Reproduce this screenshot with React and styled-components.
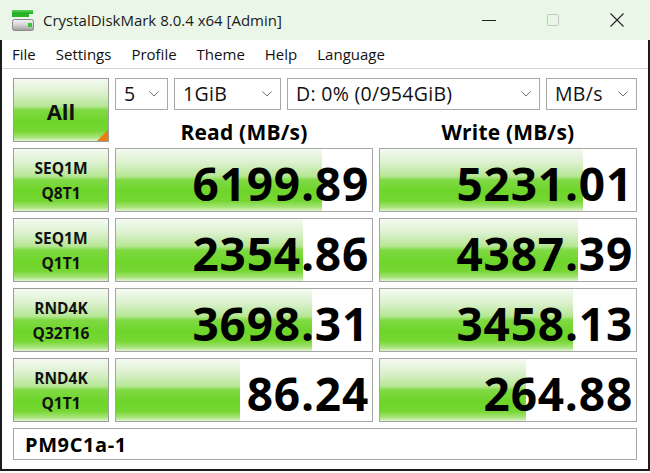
import React from "react";
import styled, { createGlobalStyle } from "styled-components";

const GlobalStyle = createGlobalStyle`
  html, body { margin: 0; padding: 0; background: #ffffff; overflow: hidden; }
  * { box-sizing: border-box; }
`;

const FONT = `"Open Sans", "Noto Sans", sans-serif`;

const GREEN = `linear-gradient(to bottom, #f4faf1 0%, #dcf1cf 22%, #b6e694 44%, #80d944 50%, #6ed52a 68%, #76d733 84%, #a6e478 94%, #e0f5d0 100%)`;

const Window = styled.div`
  width: 650px;
  height: 473px;
  display: flex;
  flex-direction: column;
  font-family: ${FONT};
  color: #000;
  background: #fff;
`;

const TitleBar = styled.div`
  height: 40px;
  flex: none;
  display: flex;
  align-items: center;
  background: #eaf7e8;
  padding-left: 12px;
`;

const TitleText = styled.div`
  margin-left: 9px;
  font-size: 15px;
  color: #1a1a1a;
  flex: 1;
  margin-top: -1px;
`;

const Controls = styled.div`
  display: flex;
  align-items: center;
  height: 100%;
  padding-right: 1px;
`;

const CtrlBtn = styled.div`
  width: 64px;
  height: 100%;
  display: flex;
  align-items: center;
  justify-content: center;
`;

const Frame = styled.div`
  height: 431px;
  flex: none;
  border: 2px solid #1c1c1c;
  border-top: none;
  display: flex;
  flex-direction: column;
`;

const MenuBar = styled.div`
  height: 29px;
  flex: none;
  display: flex;
  align-items: center;
  border-bottom: 1px solid #d4d4d4;
`;

const MenuItem = styled.div`
  font-size: 15px;
  padding: 0 10px;
  margin-top: -1px;
  color: #111;
`;

const Content = styled.div`
  padding: 9px 11px 0 11px;
  display: grid;
  grid-template-columns: 96px 258px 258px;
  grid-template-rows: 64px 64px 64px 64px 64px 32px;
  column-gap: 6px;
  row-gap: 6px;
`;

const GreenButton = styled.div`
  position: relative;
  border: 1px solid #9c9c9c;
  background: ${GREEN};
  display: flex;
  flex-direction: column;
  align-items: center;
  justify-content: center;
  font-weight: 700;
  font-size: ${(p) => p.$size || 15.5}px;
  line-height: ${(p) => p.$lh || 25}px;
  padding-top: ${(p) => p.$pt || 1}px;
  color: #111;
`;

const Corner = styled.div`
  position: absolute;
  right: 0;
  bottom: 0;
  width: 0;
  height: 0;
  border-left: 11px solid transparent;
  border-bottom: 11px solid #f07b10;
`;

const TopRight = styled.div`
  grid-column: 2 / span 2;
  display: grid;
  grid-template-rows: 32px 32px;
`;

const SelectRow = styled.div`
  display: flex;
  gap: 6px;
`;

const Select = styled.div`
  width: ${(p) => p.$w}px;
  height: 32px;
  border: 1px solid #a8a8a8;
  background: #fff;
  display: flex;
  align-items: center;
  padding: 0 8px 0 8px;
  font-size: 19.5px;
  letter-spacing: 0.3px;
  color: #111;
`;

const SelectText = styled.span`
  flex: 1;
  margin-top: -1px;
  white-space: nowrap;
`;

const HeaderRow = styled.div`
  display: grid;
  grid-template-columns: 258px 258px;
  column-gap: 6px;
`;

const Header = styled.div`
  text-align: center;
  font-weight: 700;
  font-size: 21px;
  line-height: 20px;
  padding-top: 12px;
  letter-spacing: 0.2px;
  white-space: nowrap;
`;

const ResultCell = styled.div`
  position: relative;
  border: 1px solid #a6a6a6;
  background: #fff;
  display: flex;
  align-items: center;
  justify-content: flex-end;
`;

const Fill = styled.div`
  position: absolute;
  left: 0;
  top: 0;
  bottom: 0;
  background: ${GREEN};
`;

const Value = styled.span`
  position: relative;
  font-weight: 700;
  font-size: 46px;
  line-height: 50px;
  padding-right: 3px;
  padding-top: 6px;
  letter-spacing: 0.8px;
  white-space: nowrap;
`;

const Comment = styled.div`
  grid-column: 1 / span 3;
  border: 1px solid #a6a6a6;
  display: flex;
  align-items: center;
  padding-left: 11px;
  font-weight: 700;
  font-size: 20px;
  letter-spacing: 0.6px;
`;

const Chevron = () => (
  <svg width="10" height="6" viewBox="0 0 10 6">
    <path d="M0.5 0.5 L5 5 L9.5 0.5" fill="none" stroke="#707070" strokeWidth="1" />
  </svg>
);

const AppIcon = () => (
  <svg width="22" height="24" viewBox="0 0 22 24">
    <defs>
      <linearGradient id="g1" x1="0" y1="0" x2="0" y2="1">
        <stop offset="0" stopColor="#5fd35f" />
        <stop offset="1" stopColor="#18a818" />
      </linearGradient>
      <linearGradient id="g2" x1="0" y1="0" x2="0" y2="1">
        <stop offset="0" stopColor="#f4f4f4" />
        <stop offset="0.5" stopColor="#d4d4d4" />
        <stop offset="1" stopColor="#9a9a9a" />
      </linearGradient>
    </defs>
    <rect x="0" y="2" width="21" height="4" fill="url(#g1)" />
    <rect x="0" y="6" width="17" height="3" fill="#2bb22b" />
    <rect x="0.5" y="11.5" width="21" height="11" rx="2" fill="url(#g2)" stroke="#8a8a8a" />
    <rect x="16" y="15" width="4" height="4" fill="#3cc23c" />
  </svg>
);

const rows = [
  { a: "SEQ1M", b: "Q8T1", r: "6199.89", rf: 206, w: "5231.01", wf: 203 },
  { a: "SEQ1M", b: "Q1T1", r: "2354.86", rf: 187, w: "4387.39", wf: 198 },
  { a: "RND4K", b: "Q32T16", r: "3698.31", rf: 196, w: "3458.13", wf: 193 },
  { a: "RND4K", b: "Q1T1", r: "86.24", rf: 124, w: "264.88", wf: 146 },
];

export default function App() {
  return (
    <>
      <GlobalStyle />
      <Window>
        <TitleBar>
          <AppIcon />
          <TitleText>CrystalDiskMark 8.0.4 x64 [Admin]</TitleText>
          <Controls>
            <CtrlBtn>
              <svg width="14" height="14" viewBox="0 0 14 14">
                <path d="M0 7.5 H14" stroke="#222" strokeWidth="1" />
              </svg>
            </CtrlBtn>
            <CtrlBtn>
              <svg width="14" height="14" viewBox="0 0 14 14">
                <rect x="1.5" y="1.5" width="11" height="11" rx="1" fill="none" stroke="#c4c4c4" strokeWidth="1" />
              </svg>
            </CtrlBtn>
            <CtrlBtn>
              <svg width="16" height="16" viewBox="0 0 16 16">
                <path d="M1.5 1.5 L14.5 14.5 M14.5 1.5 L1.5 14.5" stroke="#222" strokeWidth="1.1" />
              </svg>
            </CtrlBtn>
          </Controls>
        </TitleBar>
        <Frame>
          <MenuBar>
            <MenuItem>File</MenuItem>
            <MenuItem>Settings</MenuItem>
            <MenuItem>Profile</MenuItem>
            <MenuItem>Theme</MenuItem>
            <MenuItem>Help</MenuItem>
            <MenuItem>Language</MenuItem>
          </MenuBar>
          <Content>
            <GreenButton $size={22} $lh={28} $pt={2}>
              All
              <Corner />
            </GreenButton>
            <TopRight>
              <SelectRow>
                <Select $w={53}>
                  <SelectText>5</SelectText>
                  <Chevron />
                </Select>
                <Select $w={107}>
                  <SelectText>1GiB</SelectText>
                  <Chevron />
                </Select>
                <Select $w={253}>
                  <SelectText>D: 0% (0/954GiB)</SelectText>
                  <Chevron />
                </Select>
                <Select $w={91}>
                  <SelectText>MB/s</SelectText>
                  <Chevron />
                </Select>
              </SelectRow>
              <HeaderRow>
                <Header>Read (MB/s)</Header>
                <Header>Write (MB/s)</Header>
              </HeaderRow>
            </TopRight>
            {rows.map((row, i) => (
              <React.Fragment key={i}>
                <GreenButton>
                  <span>{row.a}</span>
                  <span>{row.b}</span>
                </GreenButton>
                <ResultCell>
                  <Fill style={{ width: row.rf }} />
                  <Value>{row.r}</Value>
                </ResultCell>
                <ResultCell>
                  <Fill style={{ width: row.wf }} />
                  <Value>{row.w}</Value>
                </ResultCell>
              </React.Fragment>
            ))}
            <Comment>PM9C1a-1</Comment>
          </Content>
        </Frame>
      </Window>
    </>
  );
}
